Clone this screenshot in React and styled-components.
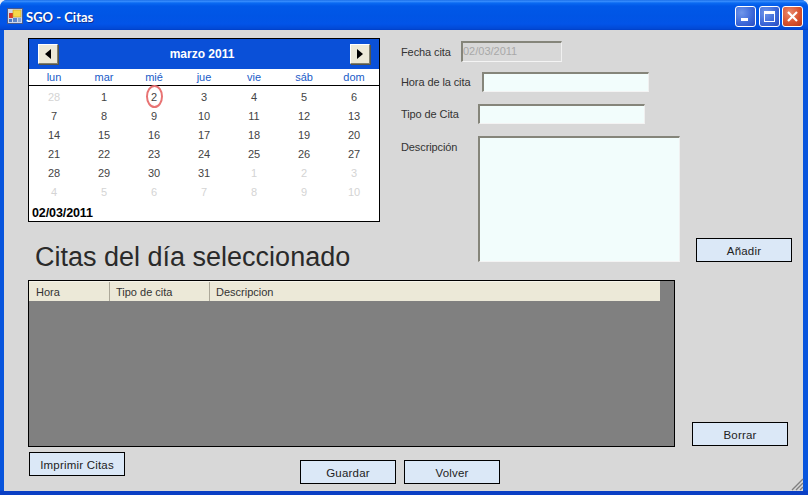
import React from 'react';
import styled, { createGlobalStyle } from 'styled-components';

const Global = createGlobalStyle`
  html, body { margin: 0; padding: 0; background: #e8eef8; overflow: hidden; }
  body { font-family: "Liberation Sans", Arial, sans-serif; }
`;

const Win = styled.div`
  position: relative; width: 808px; height: 495px; display: flex; flex-direction: column;
  border-radius: 7px 7px 0 0; overflow: hidden;
  background: linear-gradient(180deg, #0855dd 0, #0855dd 490px, #0a3fc4 491px, #0a3fc4 495px);
`;
const TitleBar = styled.div`
  height: 30px; flex: none; display: flex; align-items: center; padding: 0 5px 0 7px; box-sizing: border-box;
  background: linear-gradient(180deg, #0a5fe0 0, #3f93ff 1px, #0a6af2 3px, #0058e8 6px, #0055e5 16px, #0254e8 24px, #0248d4 29px, #003dc4 30px);
`;
const TitleIcon = styled.svg` width: 16px; height: 16px; flex: none; margin-top: 1px; `;
const TitleText = styled.div`
  margin: 3px 0 0 3px; color: #fff; font: bold 13px "Lato", sans-serif;
  text-shadow: 1px 1px 0 #0f2f8f; flex: 1;
`;
const WinBtn = styled.div`
  width: 21px; height: 21px; box-sizing: border-box; margin-left: ${p => p.$ml || 2}px; margin-top: 2px; border: 1px solid #fff; border-radius: 3px;
  display: flex; align-items: center; justify-content: center;
  background: ${p => p.$close
    ? 'radial-gradient(circle at 35% 30%, #e98a6e 0, #d9532f 55%, #b8381a 100%)'
    : 'radial-gradient(circle at 30% 30%, #6f96ea 0, #3a66d8 60%, #2a4cc0 100%)'};
`;
const Client = styled.div`
  flex: none; width: 799px; height: 461px; margin-left: 4px; box-sizing: border-box; padding: 8px 0 0 24px;
  background: #d8d8d8; display: flex; flex-direction: column;
`;
const TopRow = styled.div` display: flex; height: 224px; flex: none; `;
const LeftCol = styled.div` width: 352px; flex: none; display: flex; flex-direction: column; `;
const Calendar = styled.div`
  width: 352px; height: 184px; flex: none; box-sizing: border-box; border: 1px solid #000; background: #fff; display: flex; flex-direction: column;
`;
const CalHead = styled.div`
  height: 30px; flex: none; background: #0a50d8; display: flex; align-items: center; justify-content: space-between; padding: 0 9px;
  color: #fff; font: bold 12px "Liberation Sans", sans-serif;
`;
const MonthTitle = styled.span` margin-right: 4px; `;
const NavBtn = styled.div`
  width: 20px; height: 20px; box-sizing: border-box; background: #ece9d8; display: flex; align-items: center; justify-content: center;
  border: 1px solid; border-color: #fff #808070 #808070 #fff; box-shadow: 1px 1px 0 #55554a;
`;
const Arrow = styled.svg` width: 6px; height: 10px; `;
const Grid = styled.div` display: grid; grid-template-columns: repeat(7, 50px); `;
const WeekRow = styled(Grid)`
  height: 16px; flex: none; border-bottom: 1px solid #000; align-items: center;
`;
const WeekDay = styled.div` text-align: center; color: #1a5cc8; font-size: 11px; `;
const Days = styled(Grid)` margin-top: 1px; grid-auto-rows: 19px; `;
const Day = styled.div`
  position: relative; display: flex; align-items: center; justify-content: center; font-size: 11px;
  color: ${p => p.$muted ? '#d4d4d4' : '#444'};
`;
const Ring = styled.span`
  position: absolute; left: 17px; top: -2px; width: 17px; height: 23px; box-sizing: border-box;
  border: 2px solid #e87474; border-radius: 50%;
`;
const TodayLabel = styled.div` margin: 5px 0 0 3px; font: bold 12.5px "Liberation Sans", sans-serif; letter-spacing: -0.1px; color: #000; `;
const Heading = styled.h1`
  margin: 20px 0 0 7px; font: normal 27px "Liberation Sans", sans-serif; color: #2a2a2a; white-space: nowrap; line-height: 30px;
`;
const RightCol = styled.div` margin-left: 21px; display: flex; flex-direction: column; `;
const FormRow = styled.div` display: flex; align-items: ${p => p.$top ? 'flex-start' : 'center'}; margin-top: ${p => p.$mt}px; `;
const Label = styled.label`
  width: ${p => p.$w}px; flex: none; font-size: 11px; letter-spacing: -0.1px; color: #333; ${p => p.$top && 'padding-top: 5px;'}
`;
const Field = styled.div`
  width: ${p => p.$w}px; height: ${p => p.$h}px; box-sizing: border-box; border: 2px solid; border-color: #85857a #f0f0f0 #f4f4f4 #85857a;
  background: ${p => p.$disabled ? '#d8d8d8' : '#f2fdfc'}; color: #a8a8a8; font-size: 11px; padding: 2px 0 0 0; border-right-width: 1px; border-bottom-width: 1px;
`;
const Btn = styled.button`
  width: 96px; height: 24px; box-sizing: border-box; border: 1px solid #000; background: #dbe8f7; color: #222; padding: 1px 0 0;
  font: 11.5px "Liberation Sans", sans-serif; letter-spacing: .2px; flex: none;
`;
const AddBtn = styled(Btn)` margin-left: 16px; align-self: flex-end; `;
const MiddleRow = styled.div` display: flex; align-items: flex-end; margin-top: 18px; flex: none; `;
const Table = styled.div`
  width: 647px; height: 167px; box-sizing: border-box; border: 1px solid #000; background: #808080; flex: none;
`;
const THead = styled.div` width: 631px; height: 20px; display: flex; background: #ece9d8; border-top: 1px solid #f6f4ea; box-sizing: border-box; `;
const TH = styled.div`
  width: ${p => p.$w}px; flex: none; box-sizing: border-box; padding: 4px 0 0 ${p => p.$pl}px; font-size: 11px; color: #333;
  border-right: ${p => p.$sep ? '1px solid #aca899' : 'none'};
`;
const DeleteBtn = styled(Btn)` margin: 0 0 1px 17px; `;
const BottomRow = styled.div` display: flex; align-items: flex-end; margin-top: 5px; padding-left: 1px; `;
const PrintBtn = styled(Btn)` margin-bottom: 8px; margin-right: 175px; `;
const NavAction = styled(Btn)` margin-right: 8px; `;
const Grip = styled.svg` position: absolute; right: 4px; bottom: 4px; width: 13px; height: 13px; `;

const weekDays = ['lun', 'mar', 'mié', 'jue', 'vie', 'sáb', 'dom'];
const days = [
  { n: 28, muted: true },
  ...Array.from({ length: 31 }, (_, i) => ({ n: i + 1, muted: false })),
  ...[1, 2, 3, 4, 5, 6, 7, 8, 9, 10].map(n => ({ n, muted: true })),
];

export default function App() {
  return (
    <Win>
      <Global />
      <TitleBar>
        <TitleIcon viewBox="0 0 16 16">
          <rect x="0.5" y="0.5" width="15" height="15" fill="#cfd8ea" stroke="#4a5a8a" />
          <rect x="2" y="5" width="4" height="5" fill="#d83a2a" />
          <rect x="6" y="2" width="8" height="7" fill="#f6d84a" stroke="#c8a020" strokeWidth=".6" />
          <rect x="2" y="11" width="3" height="3" fill="#4a78c8" />
          <rect x="6" y="10" width="4" height="4" fill="#5f86c8" />
          <rect x="11" y="10" width="3" height="4" fill="#8aa8d8" />
        </TitleIcon>
        <TitleText>SGO - Citas</TitleText>
        <WinBtn>
          <svg width="11" height="11" viewBox="0 0 11 11"><rect x="1" y="7" width="7" height="3" fill="#fff" /></svg>
        </WinBtn>
        <WinBtn $ml={3}>
          <svg width="13" height="13" viewBox="0 0 13 13"><rect x="1.5" y="1.5" width="10" height="10" fill="none" stroke="#fff" /><rect x="1" y="1" width="11" height="3" fill="#fff" /></svg>
        </WinBtn>
        <WinBtn $ml={2} $close>
          <svg width="13" height="13" viewBox="0 0 13 13"><path d="M2 2 L11 11 M11 2 L2 11" stroke="#fff" strokeWidth="2.2" /></svg>
        </WinBtn>
      </TitleBar>
      <Client>
        <TopRow>
          <LeftCol>
            <Calendar>
              <CalHead>
                <NavBtn><Arrow viewBox="0 0 6 10"><path d="M6 0 V10 L0 5 Z" fill="#000" /></Arrow></NavBtn>
                <MonthTitle>marzo 2011</MonthTitle>
                <NavBtn><Arrow viewBox="0 0 6 10"><path d="M0 0 V10 L6 5 Z" fill="#000" /></Arrow></NavBtn>
              </CalHead>
              <WeekRow>{weekDays.map(d => <WeekDay key={d}>{d}</WeekDay>)}</WeekRow>
              <Days>
                {days.map((d, i) => (
                  <Day key={i} $muted={d.muted}>{d.n}{i === 2 && <Ring />}</Day>
                ))}
              </Days>
              <TodayLabel>02/03/2011</TodayLabel>
            </Calendar>
            <Heading>Citas del día seleccionado</Heading>
          </LeftCol>
          <RightCol>
            <FormRow $mt={3}><Label $w={60}>Fecha cita</Label><Field $w={101} $h={21} $disabled>02/03/2011</Field></FormRow>
            <FormRow $mt={10}><Label $w={81}>Hora de la cita</Label><Field $w={167} $h={20} /></FormRow>
            <FormRow $mt={12}><Label $w={77}>Tipo de Cita</Label><Field $w={167} $h={20} /></FormRow>
            <FormRow $mt={12} $top>
              <Label $w={77} $top>Descripción</Label>
              <Field $w={202} $h={126} />
              <AddBtn>Añadir</AddBtn>
            </FormRow>
          </RightCol>
        </TopRow>
        <MiddleRow>
          <Table>
            <THead>
              <TH $w={81} $pl={7} $sep>Hora</TH>
              <TH $w={100} $pl={6} $sep>Tipo de cita</TH>
              <TH $w={200} $pl={6}>Descripcion</TH>
            </THead>
          </Table>
          <DeleteBtn>Borrar</DeleteBtn>
        </MiddleRow>
        <BottomRow>
          <PrintBtn>Imprimir Citas</PrintBtn>
          <NavAction>Guardar</NavAction>
          <NavAction>Volver</NavAction>
        </BottomRow>
      </Client>
      <Grip viewBox="0 0 13 13">
        <path d="M12 1 L1 12 M12 5 L5 12 M12 9 L9 12" stroke="#808080" strokeWidth="1.4" />
      </Grip>
    </Win>
  );
}
